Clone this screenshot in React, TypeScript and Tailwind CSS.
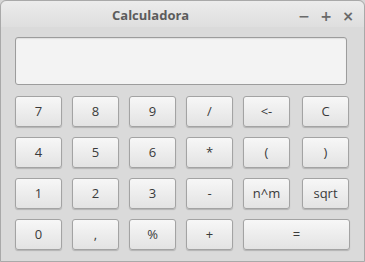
import React from "react";

const Btn = ({ label, className = "" }: { label: string; className?: string }) => (
  <button
    className={
      "h-[31px] rounded-[3px] border border-[#a3a3a3] bg-gradient-to-b from-[#f7f7f7] to-[#e3e3e3] text-[13px] text-[#3a3a3a] shadow-[0_1px_1px_rgba(0,0,0,0.18)] flex items-center justify-center " +
      className
    }
    style={{ fontFamily: '"Open Sans", "DejaVu Sans", sans-serif' }}
  >
    {label}
  </button>
);

export default function App() {
  const rows = [
    ["7", "8", "9", "/", "<-", "C"],
    ["4", "5", "6", "*", "(", ")"],
    ["1", "2", "3", "-", "n^m", "sqrt"],
  ];
  return (
    <div className="w-[365px] h-[262px] bg-[#d6d6d6] overflow-hidden">
      <div className="w-[365px] h-[262px] rounded-t-[6px] border border-[#a9a9a9] bg-[#dadada] flex flex-col">
        <div className="h-[26px] rounded-t-[6px] bg-gradient-to-b from-[#ececec] to-[#dedede] flex items-center relative">
          <div
            className="absolute left-[111px] top-[5px] text-[13px] font-bold text-[#5c5c5c]"
            style={{ fontFamily: '"Open Sans", "DejaVu Sans", sans-serif' }}
          >
            Calculadora
          </div>
          <div className="absolute right-[10px] top-[5px] flex items-center gap-[10px] text-[#6a6a6a] text-[14px] font-bold" style={{ fontFamily: '"DejaVu Sans", sans-serif' }}>
            <span className="w-[12px] flex justify-center">−</span>
            <span className="w-[12px] flex justify-center">+</span>
            <span className="w-[12px] flex justify-center">×</span>
          </div>
        </div>
        <div className="pl-[14px] pt-[10px]">
          <div className="w-[332px] h-[48px] rounded-[3px] border border-[#9c9c9c] bg-[#f3f3f3] shadow-[inset_0_1px_1px_rgba(0,0,0,0.08)]" />
          <div className="mt-[11px] grid grid-cols-[57px_57px_57px_57px_59px_47px] gap-y-[10px]">
            {rows.map((r, i) => (
              <React.Fragment key={i}>
                {r.map((l) => (
                  <Btn key={l} label={l} className="w-[47px]" />
                ))}
              </React.Fragment>
            ))}
            <Btn label="0" className="w-[47px]" />
            <Btn label="," className="w-[47px]" />
            <Btn label="%" className="w-[47px]" />
            <Btn label="+" className="w-[47px]" />
            <Btn label="=" className="col-span-2 w-[107px]" />
          </div>
        </div>
      </div>
    </div>
  );
}
